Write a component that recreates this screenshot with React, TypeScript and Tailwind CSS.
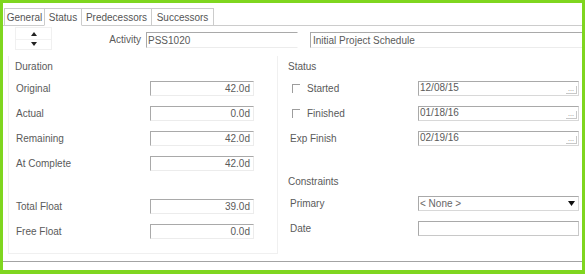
import React from 'react';

const font = { fontFamily: '"Liberation Sans", Arial, sans-serif' };

function Field({ value, align = 'right', className = '' }: { value: string; align?: 'left' | 'right'; className?: string }) {
  return (
    <div
      className={`shrink-0 h-[15px] border-t border-l border-t-[#a9a9a9] border-l-[#a9a9a9] border-r border-b border-r-[#ececec] border-b-[#ececec] bg-white text-[10px] leading-[13px] text-[#5a5a5a] flex items-center ${
        align === 'right' ? 'justify-end pr-[3px]' : 'pl-[1px]'
      } ${className}`}
    >
      {value}
    </div>
  );
}

function DateField({ value }: { value: string }) {
  return (
    <div className="w-[161px] h-[15px] border-t border-l border-t-[#a9a9a9] border-l-[#a9a9a9] border-r border-b border-r-[#d8d8d8] border-b-[#d8d8d8] flex text-[10px] text-[#5a5a5a]">
      <span className="flex-1 pl-[1px] leading-[12px]">{value}</span>
      <span className="w-[11px] self-end mb-[1px] mr-[1px] h-[8px] border-r border-b border-[#c8c8c8] text-[7px] leading-[6px] text-[#777] text-center">
        ...
      </span>
    </div>
  );
}

function Check() {
  return <span className="w-[8px] h-[9px] border-t border-l border-[#9d9d9d] mr-[7px]" />;
}

const durations: [string, string][] = [
  ['Original', '42.0d'],
  ['Actual', '0.0d'],
  ['Remaining', '42.0d'],
  ['At Complete', '42.0d'],
];

const floats: [string, string][] = [
  ['Total Float', '39.0d'],
  ['Free Float', '0.0d'],
];

export default function App() {
  const tabs = [
    { label: 'General', w: 'w-[41px]' },
    { label: 'Status', w: 'w-[38px]', active: true },
    { label: 'Predecessors', w: 'w-[71px]' },
    { label: 'Successors', w: 'w-[63px]' },
  ];

  return (
    <div className="w-[585px] h-[274px] bg-[#7fd61f] pt-[3px] px-[3px] pb-[4px]" style={font}>
      <div className="w-full h-full bg-white flex flex-col text-[10px] text-[#5a5a5a] overflow-hidden">
        {/* Tabs */}
        <div className="h-[23px] pt-[5px] flex items-end border-b border-[#cccccc]">
          <div className="flex ml-[1px] -mb-px">
            {tabs.map((t) => (
              <div
                key={t.label}
                className={`${t.w} h-[18px] border-t border-l border-r border-[#cccccc] -mr-px flex items-center justify-center text-[10px] text-[#555] ${
                  t.active ? 'border-b border-b-white bg-white z-10' : 'border-b border-b-[#cccccc]'
                }`}
              >
                {t.label}
              </div>
            ))}
          </div>
        </div>

        {/* Activity header */}
        <div className="h-[30px] flex items-start">
          <div className="shrink-0 ml-[12px] mt-[1px] w-[37px] h-[23px] border border-[#f0f0f0] flex flex-col items-center">
            <svg width="6" height="4" viewBox="0 0 6 4" className="mt-[4px]">
              <polygon points="3,0 6,4 0,4" fill="#222" />
            </svg>
            <div className="w-full h-px bg-[#f2f2f2] mt-[3px]" />
            <svg width="6" height="4" viewBox="0 0 6 4" className="mt-[2px]">
              <polygon points="0,0 6,0 3,4" fill="#222" />
            </svg>
          </div>
          <span className="shrink-0 w-[89px] text-right mt-[8px] leading-[12px]">Activity</span>
          <Field value="PSS1020" align="left" className="ml-[5px] mt-[6px] w-[152px] h-[16px] border-r-white" />
          <Field value="Initial Project Schedule" align="left" className="ml-[12px] mt-[6px] w-[300px] h-[16px] pl-[2px]" />
        </div>

        {/* Body */}
        <div className="flex h-[205px]">
          {/* Duration group */}
          <div className="ml-[5px] w-[270px] h-[198px] border-l border-r border-b border-[#f0f0f0] flex flex-col">
            <div className="h-[20px] pl-[6px] flex items-center">Duration</div>
            {durations.map(([l, v]) => (
              <div key={l} className="h-[25px] flex items-center">
                <span className="w-[141px] pl-[7px]">{l}</span>
                <Field value={v} className="w-[104px]" />
              </div>
            ))}
            <div className="h-[18px]" />
            {floats.map(([l, v]) => (
              <div key={l} className="h-[25px] flex items-center">
                <span className="w-[141px] pl-[7px]">{l}</span>
                <Field value={v} className="w-[104px]" />
              </div>
            ))}
          </div>

          {/* Status / Constraints */}
          <div className="flex-1 flex flex-col pl-[10px]">
            <div className="h-[20px] flex items-center">Status</div>
            <div className="h-[25px] flex items-center">
              <span className="w-[130px] pl-[4px] flex items-center">
                <Check />
                Started
              </span>
              <DateField value="12/08/15" />
            </div>
            <div className="h-[25px] flex items-center">
              <span className="w-[130px] pl-[4px] flex items-center">
                <Check />
                Finished
              </span>
              <DateField value="01/18/16" />
            </div>
            <div className="h-[25px] flex items-center">
              <span className="w-[130px] pl-[2px]">Exp Finish</span>
              <DateField value="02/19/16" />
            </div>
            <div className="h-[20px]" />
            <div className="h-[20px] flex items-center">Constraints</div>
            <div className="h-[25px] flex items-center">
              <span className="w-[130px] pl-[2px]">Primary</span>
              <div className="w-[161px] h-[15px] border-t border-l border-t-[#a9a9a9] border-l-[#a9a9a9] border-r border-b border-r-[#d8d8d8] border-b-[#d8d8d8] flex items-center text-[10px]">
                <span className="flex-1 pl-[1px] text-[#666]">&lt; None &gt;</span>
                <svg width="7" height="5" viewBox="0 0 7 5" className="mr-[3px]">
                  <polygon points="0,0 7,0 3.5,5" fill="#111" />
                </svg>
              </div>
            </div>
            <div className="h-[25px] flex items-center">
              <span className="w-[130px] pl-[2px]">Date</span>
              <div className="w-[161px] h-[15px] border-t border-l border-t-[#a9a9a9] border-l-[#a9a9a9] border-r border-b border-r-[#c8c8c8] border-b-[#c8c8c8]" />
            </div>
          </div>
        </div>

        {/* Bottom rule */}
        <div className="h-px bg-[#a3a3a3]" />
        <div className="flex-1" />
      </div>
    </div>
  );
}
